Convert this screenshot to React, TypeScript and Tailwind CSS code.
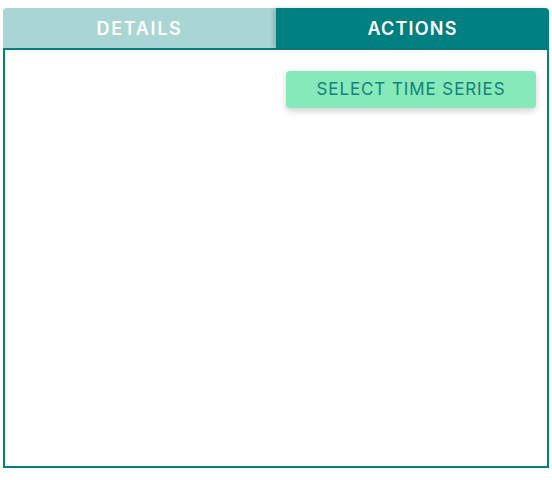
import { useState } from "react";

function App() {
  const [activeTab, setActiveTab] = useState("actions");

  return (
    <div className="w-[552px] h-[480px] bg-white pt-2 px-[3px] font-['Inter','Liberation_Sans',sans-serif]">
      {/* tabs */}
      <div className="flex h-10">
        <button
          onClick={() => setActiveTab("details")}
          className={`flex-1 rounded-tl-[4px] pt-[1px] text-white text-[18px] font-semibold tracking-[1.7px] ${
            activeTab === "details" ? "bg-[#008080]" : "bg-[#a9d5d5]"
          }`}
        >
          DETAILS
        </button>
        <button
          onClick={() => setActiveTab("actions")}
          className={`flex-1 rounded-tr-[4px] pt-[1px] text-white text-[18px] font-semibold tracking-[1.2px] shadow-[-3px_0_4px_rgba(0,0,0,0.15)] ${
            activeTab === "actions" ? "bg-[#008080]" : "bg-[#a9d5d5]"
          }`}
        >
          ACTIONS
        </button>
      </div>

      {/* panel */}
      <div className="h-[420px] border-2 border-[#008080]">
        <div className="flex justify-end pt-[21px] pr-[11px]">
          <button className="w-[250px] h-[37px] pt-[1px] rounded-[4px] bg-[#86e9b9] text-[#17807a] text-[17px] tracking-[0.9px] shadow-[0_3px_6px_rgba(0,0,0,0.18)]">
            SELECT TIME SERIES
          </button>
        </div>
      </div>
    </div>
  );
}

export default App;
